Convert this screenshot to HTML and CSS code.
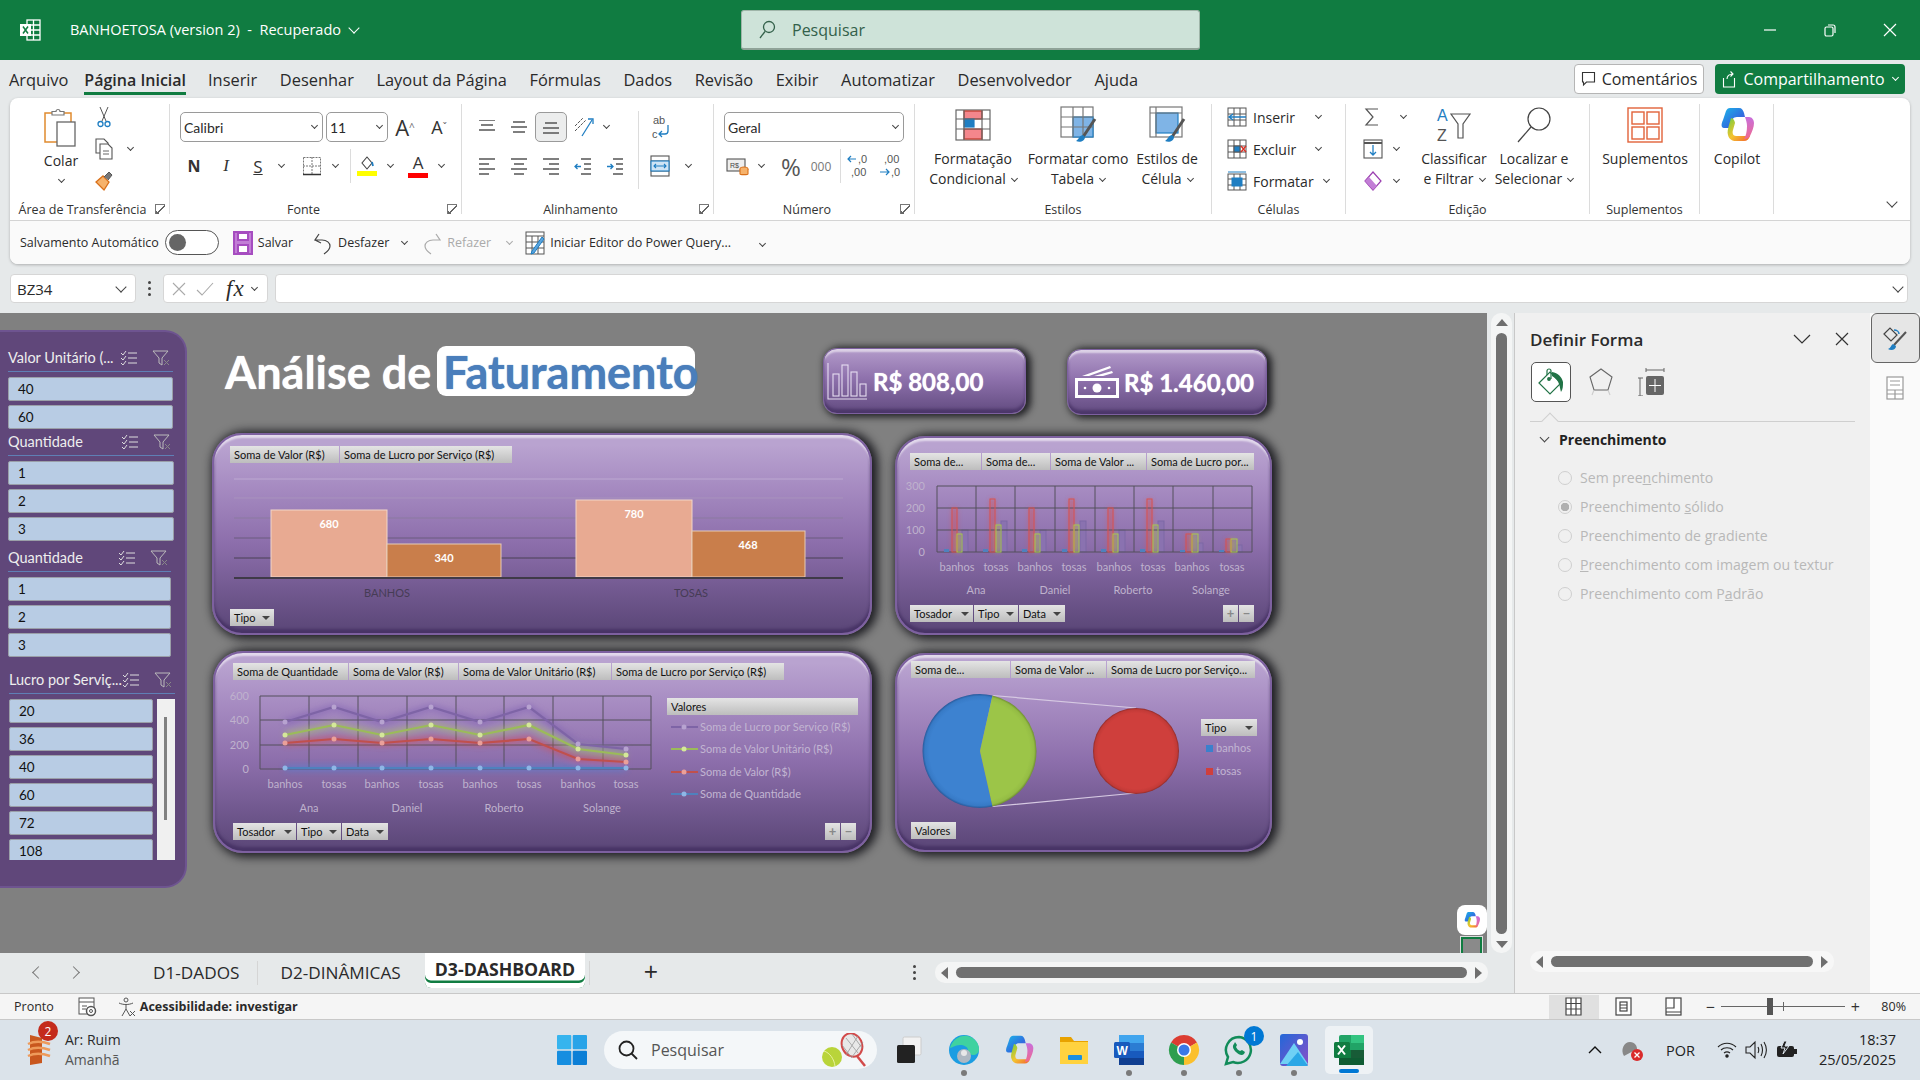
FILE: index.html
```html
<!DOCTYPE html>
<html lang="pt-BR">
<head>
<meta charset="UTF-8">
<title>BANHOETOSA - Excel</title>
<link rel="stylesheet" href="styles.css">
</head>
<body>
<div class="app">

    <!-- Barra de titulo -->
    <header class="titlebar">
        <div class="title-left">
            <svg class="xl-mark" width="22" height="24" viewBox="0 0 22 24" fill="none" stroke="#fff" stroke-width="1.3"><rect x="8" y="2" width="13" height="20"/><path d="M8 7h13M8 12h13M8 17h13M14.500 2v20"/><rect x="1" y="6" width="11" height="12" fill="#fff" stroke="none"/><path d="M4 8.500l5 7M9 8.500l-5 7" stroke="#107c41" stroke-width="1.500"/></svg>
            <span class="doc-name">BANHOETOSA (version 2)&nbsp; -&nbsp; Recuperado</span>
            <span class="ch ch-white"></span>
        </div>
        <div class="search-box">
            <svg width="18" height="20" viewBox="0 0 18 20" fill="none" stroke="#33604a" stroke-width="1.300"><circle cx="11" cy="7" r="5.500"/><path d="M7 11.500L2 18"/></svg>
            <span>Pesquisar</span>
        </div>
        <div class="win-controls">
            <svg width="14" height="14" viewBox="0 0 14 14" stroke="#fff" stroke-width="1.200"><path d="M1 7h12"/></svg>
            <svg width="14" height="14" viewBox="0 0 14 14" stroke="#fff" stroke-width="1.200" fill="none"><rect x="2" y="4" width="8" height="9" rx="1.500"/><path d="M5 2h5a2 2 0 0 1 2 2v6"/></svg>
            <svg width="14" height="14" viewBox="0 0 14 14" stroke="#fff" stroke-width="1.200"><path d="M1 1l12 12M13 1L1 13"/></svg>
        </div>
    </header>

    <!-- Abas -->
    <nav class="tabs">
        <span class="tab first">Arquivo</span>
        <span class="tab active">Página Inicial</span>
        <span class="tab">Inserir</span>
        <span class="tab">Desenhar</span>
        <span class="tab">Layout da Página</span>
        <span class="tab">Fórmulas</span>
        <span class="tab">Dados</span>
        <span class="tab">Revisão</span>
        <span class="tab">Exibir</span>
        <span class="tab">Automatizar</span>
        <span class="tab">Desenvolvedor</span>
        <span class="tab">Ajuda</span>
        <div class="tab-actions">
            <button class="btn-comments">
                <svg width="15" height="16" viewBox="0 0 15 16" fill="none" stroke="#333" stroke-width="1.100"><path d="M1.500 1.500h12v9.500h-8l-3 3v-3h-1z"/></svg>
                Comentários
            </button>
            <button class="btn-share">
                <svg width="15" height="17" viewBox="0 0 15 17" fill="none" stroke="#fff" stroke-width="1.100"><path d="M1.500 7v9h11V7M5 8c0-3 2-5 6-5M8.500 0.500L11 3 8.500 5.500"/></svg>
                Compartilhamento
                <span class="ch ch-white ch-small"></span>
            </button>
        </div>
    </nav>

    <!-- Faixa de opcoes -->
    <section class="ribbon">
        <div class="ribbon-groups">

            <div class="group g-clip">
                <div class="group-body clip-body">
                    <div class="paste">
                        <svg width="36" height="40" viewBox="0 0 36 40" fill="none"><rect x="2" y="5" width="26" height="29" fill="#fff" stroke="#e08a2e" stroke-width="1.500"/><path d="M9 7V3.500h4a2 2 0 0 1 4 0h4V7z" fill="#fff" stroke="#777" stroke-width="1.200"/><rect x="14" y="14" width="18" height="24" fill="#fff" stroke="#666" stroke-width="1.300"/></svg>
                        <span class="lbl">Colar</span>
                        <span class="ch"></span>
                    </div>
                    <div class="clip-tools">
                        <svg width="16" height="22" viewBox="0 0 16 22" fill="none" stroke="#555" stroke-width="1"><path d="M4 1l6 14M12 1L6 15"/><circle cx="4.500" cy="18" r="2.500" stroke="#1f7ec2" stroke-width="1.300"/><circle cx="11.500" cy="18" r="2.500" stroke="#1f7ec2" stroke-width="1.300"/></svg>
                        <div class="tool-row">
                            <svg width="20" height="22" viewBox="0 0 20 22" fill="#fff" stroke="#555" stroke-width="1.100"><path d="M2 1h8l4 4v10H2z"/><path d="M6 6h8l4 4v11H6z"/><path d="M9 13h6M9 16h6" stroke-width=".9"/></svg>
                            <span class="ch"></span>
                        </div>
                        <svg class="brush" width="20" height="22" viewBox="0 0 20 22" fill="none"><path d="M2 12l7-6 6 6-5 8z" fill="#f6b26b" stroke="#d9701a" stroke-width="1.300"/><path d="M10 7l5-5 3 3-4 5" fill="#777" stroke="#555"/></svg>
                    </div>
                </div>
                <div class="group-label"><span>Área de Transferência</span><i class="launcher"></i></div>
            </div>

            <div class="group g-font">
                <div class="group-body">
                    <div class="row">
                        <div class="combo c-font">Calibri<span class="ch"></span></div>
                        <div class="combo c-size">11<span class="ch"></span></div>
                        <span class="ib grow">A<sup>^</sup></span>
                        <span class="ib grow small-a">A<sup>ˇ</sup></span>
                    </div>
                    <div class="row row2">
                        <span class="ib bold">N</span>
                        <span class="ib ital">I</span>
                        <span class="ib under">S</span>
                        <span class="ch ch-slot"></span>
                        <span class="ib ib-border">
                            <svg width="20" height="20" viewBox="0 0 20 20" fill="none" stroke="#777" stroke-width="1" stroke-dasharray="2 1"><rect x="1.500" y="1.500" width="17" height="17"/><path d="M10 1v18M1 10h18"/><path d="M1 18.500h18" stroke="#333" stroke-width="1.500" stroke-dasharray="none"/></svg>
                        </span>
                        <span class="ch ch-slot"></span>
                        <i class="vsep"></i>
                        <span class="ib swatch-btn">
                            <svg width="18" height="14" viewBox="0 0 18 14" fill="#fff" stroke="#444" stroke-width="1.100"><path d="M9 1l5 6-5 6-5-6z"/><path d="M14 6l1 4" stroke="#1f7ec2" stroke-width="1.800"/></svg>
                            <i class="swatch yellow"></i>
                        </span>
                        <span class="ch ch-slot"></span>
                        <span class="ib swatch-btn ib-fc">
                            <b class="font-color">A</b>
                            <i class="swatch red"></i>
                        </span>
                        <span class="ch ch-slot"></span>
                    </div>
                </div>
                <div class="group-label label-font"><span>Fonte</span><i class="launcher"></i></div>
            </div>

            <div class="group g-align">
                <div class="group-body">
                    <div class="row">
                        <span class="ib"><svg width="18" height="14" viewBox="0 0 18 14" stroke="#555" stroke-width="1.300"><path d="M1 1h16M3 6h12M1 11h16" transform="translate(0 -1)"/></svg></span>
                        <span class="ib"><svg width="18" height="14" viewBox="0 0 18 14" stroke="#555" stroke-width="1.300"><path d="M3 2h12M1 7h16M3 12h12"/></svg></span>
                        <span class="ib ib-on"><svg width="18" height="14" viewBox="0 0 18 14" stroke="#555" stroke-width="1.300"><path d="M3 3h12M1 8h16M1 13h16"/></svg></span>
                        <span class="ib"><svg width="22" height="22" viewBox="0 0 22 22" fill="none" stroke="#555" stroke-width="1"><path d="M3 10l8-8M3 15l11-11" stroke-dasharray="3 1"/><path d="M20 4L10 20" stroke="#1f7ec2" stroke-width="1.300"/><path d="M16 3h5v5" stroke="#1f7ec2" stroke-width="1.300"/></svg></span>
                        <span class="ch ch-slot"></span>
                        <i class="vsep tall"></i>
                        <span class="ib wrap-ico"><svg width="20" height="28" viewBox="0 0 20 28" fill="none"><text x="2" y="11" font-family="Liberation Sans" font-size="11" fill="#555">ab</text><text x="1" y="25" font-family="Liberation Sans" font-size="11" fill="#555">c</text><path d="M17 12v6a3 3 0 0 1-3 3H8m3-3l-3 3 3 3" stroke="#1f7ec2" stroke-width="1.300"/></svg></span>
                    </div>
                    <div class="row row2">
                        <span class="ib"><svg width="18" height="18" viewBox="0 0 18 18" stroke="#555" stroke-width="1.300"><path d="M1 2h16M1 7h10M1 12h16M1 17h10"/></svg></span>
                        <span class="ib"><svg width="18" height="18" viewBox="0 0 18 18" stroke="#555" stroke-width="1.300"><path d="M1 2h16M4 7h10M1 12h16M4 17h10"/></svg></span>
                        <span class="ib"><svg width="18" height="18" viewBox="0 0 18 18" stroke="#555" stroke-width="1.300"><path d="M1 2h16M7 7h10M1 12h16M7 17h10"/></svg></span>
                        <span class="ib"><svg width="18" height="18" viewBox="0 0 18 18" fill="none" stroke="#555" stroke-width="1.300"><path d="M7 2h10M10 7h7M10 12h7M7 17h10"/><path d="M7 9.500H1m2.500-2.500L1 9.500 3.500 12" stroke="#1f7ec2"/></svg></span>
                        <span class="ib"><svg width="18" height="18" viewBox="0 0 18 18" fill="none" stroke="#555" stroke-width="1.300"><path d="M7 2h10M10 7h7M10 12h7M7 17h10"/><path d="M1 9.500h6M4.500 7L7 9.500 4.500 12" stroke="#1f7ec2"/></svg></span>
                        <i class="vsep ghost"></i>
                        <span class="ib merge-ico"><svg width="20" height="22" viewBox="0 0 20 22" fill="none" stroke="#555" stroke-width="1.100"><rect x="1" y="1" width="18" height="20"/><path d="M1 6h18M1 16h18"/><rect x="1" y="6" width="18" height="10" fill="#cfe4f5" stroke="#1f7ec2"/><path d="M4 11h12M6 9l-2 2 2 2M14 9l2 2-2 2" stroke="#1f7ec2"/></svg></span>
                        <span class="ch ch-slot"></span>
                    </div>
                </div>
                <div class="group-label"><span>Alinhamento</span><i class="launcher"></i></div>
            </div>

            <div class="group g-number">
                <div class="group-body">
                    <div class="row"><div class="combo c-num">Geral<span class="ch"></span></div></div>
                    <div class="row row2">
                        <span class="ib"><svg width="24" height="20" viewBox="0 0 24 20" fill="none" stroke="#555" stroke-width="1.100"><rect x="1" y="3" width="18" height="12" fill="#eee"/><text x="4" y="12" font-size="7" font-family="Liberation Sans" fill="#444" stroke="none">R$</text><ellipse cx="18" cy="13" rx="4" ry="2" fill="#f6b26b" stroke="#d9701a"/><path d="M14 13v5c0 1 8 1 8 0v-5" fill="#f6b26b" stroke="#d9701a"/></svg></span>
                        <span class="ch ch-slot"></span>
                        <span class="pct">%</span>
                        <span class="thou">000</span>
                        <i class="vsep"></i>
                        <span class="ib"><svg width="24" height="26" viewBox="0 0 24 26" fill="none"><path d="M10 6H2m3-3L2 6l3 3" stroke="#1f7ec2" stroke-width="1.200"/><text x="12" y="10" font-size="11" font-family="Liberation Sans" fill="#555">,0</text><text x="5" y="23" font-size="11" font-family="Liberation Sans" fill="#555">,00</text></svg></span>
                        <span class="ib"><svg width="24" height="26" viewBox="0 0 24 26" fill="none"><text x="6" y="10" font-size="11" font-family="Liberation Sans" fill="#555">,00</text><text x="13" y="23" font-size="11" font-family="Liberation Sans" fill="#555">,0</text><path d="M2 19h9m-3-3l3 3-3 3" stroke="#1f7ec2" stroke-width="1.200"/></svg></span>
                    </div>
                </div>
                <div class="group-label"><span>Número</span><i class="launcher"></i></div>
            </div>

            <div class="group g-styles">
                <div class="group-body big-row">
                    <div class="big b-cond">
                        <svg class="big-ico" width="38" height="36" viewBox="0 0 38 36" fill="#fff" stroke="#666" stroke-width="1.200"><rect x="2" y="3" width="34" height="30"/><rect x="10" y="4" width="18" height="8" fill="#f4868c" stroke="#c0392b"/><rect x="10" y="12" width="10" height="8" fill="#1f7ec2" stroke="#1f7ec2"/><rect x="10" y="22" width="18" height="10" fill="#f4868c" stroke="#c0392b"/><path d="M2 12h34M2 22h34M10 3v30M28 3v30"/></svg>
                        <span class="lbl">Formatação</span>
                        <span class="lbl">Condicional<span class="ch"></span></span>
                    </div>
                    <div class="big b-table">
                        <svg class="big-ico" width="38" height="40" viewBox="0 0 38 40" fill="#fff" stroke="#777" stroke-width="1.200"><rect x="2" y="2" width="32" height="30"/><rect x="14" y="12" width="20" height="20" fill="#7fb4e6" stroke="#1f7ec2"/><path d="M2 12h32M2 22h32M14 2v30M24 2v30"/><path d="M36 14L24 32" stroke="#555" stroke-width="3"/><path d="M24 30c-3 0-4 4-7 6 4 2 9 0 9-4z" fill="#1f7ec2" stroke="none"/></svg>
                        <span class="lbl">Formatar como</span>
                        <span class="lbl">Tabela<span class="ch"></span></span>
                    </div>
                    <div class="big b-cell">
                        <svg class="big-ico" width="38" height="40" viewBox="0 0 38 40" fill="#fff" stroke="#777" stroke-width="1.200"><rect x="2" y="2" width="32" height="30"/><rect x="8" y="8" width="22" height="20" fill="#7fb4e6" stroke="#1f7ec2"/><path d="M2 8h32M8 2v30"/><path d="M36 14L24 32" stroke="#555" stroke-width="3"/><path d="M24 30c-3 0-4 4-7 6 4 2 9 0 9-4z" fill="#1f7ec2" stroke="none"/></svg>
                        <span class="lbl">Estilos de</span>
                        <span class="lbl">Célula<span class="ch"></span></span>
                    </div>
                </div>
                <div class="group-label"><span>Estilos</span></div>
            </div>

            <div class="group g-cells">
                <div class="group-body stack">
                    <div class="stack-row">
                        <svg width="22" height="20" viewBox="0 0 22 20" fill="#fff" stroke="#555" stroke-width="1"><rect x="2" y="1" width="18" height="18"/><path d="M2 7h18M2 13h18M8 1v18M14 1v18"/><path d="M20 10H3m4-3l-4 3 4 3" fill="none" stroke="#1f7ec2" stroke-width="1.500"/></svg>
                        <span>Inserir</span><span class="ch ch-end"></span>
                    </div>
                    <div class="stack-row">
                        <svg width="22" height="20" viewBox="0 0 22 20" fill="#fff" stroke="#555" stroke-width="1"><rect x="2" y="1" width="18" height="18"/><path d="M2 7h18M2 13h18M8 1v18M14 1v18"/><rect x="8" y="7" width="6" height="6" fill="#1f7ec2"/><path d="M15 7l5 6M20 7l-5 6" stroke="#d93025" stroke-width="1.400"/></svg>
                        <span>Excluir</span><span class="ch ch-end"></span>
                    </div>
                    <div class="stack-row">
                        <svg width="22" height="20" viewBox="0 0 22 20" fill="#fff" stroke="#555" stroke-width="1"><rect x="2" y="3" width="18" height="16"/><path d="M2 8h18M2 14h18M8 3v16M14 3v16"/><rect x="6" y="7" width="10" height="8" fill="#1f7ec2" stroke="#1f7ec2"/><path d="M2 1h18" stroke="#1f7ec2"/></svg>
                        <span>Formatar</span><span class="ch"></span>
                    </div>
                </div>
                <div class="group-label"><span>Células</span></div>
            </div>

            <div class="group g-edit">
                <div class="group-body big-row">
                    <div class="stack edit-stack">
                        <div class="stack-row"><svg width="18" height="20" viewBox="0 0 18 20" fill="none" stroke="#555" stroke-width="1.200"><path d="M15 2H3l7 8-7 8h12"/></svg><span class="ch ch-sum"></span></div>
                        <div class="stack-row"><svg width="20" height="20" viewBox="0 0 20 20" fill="#fff" stroke="#555" stroke-width="1.100"><rect x="1" y="1" width="18" height="18"/><path d="M1 4h18" stroke-width="2"/><path d="M10 6v10m-3-3l3 3 3-3" fill="none" stroke="#1f7ec2" stroke-width="1.300"/></svg><span class="ch"></span></div>
                        <div class="stack-row"><svg width="20" height="20" viewBox="0 0 20 20" stroke="#9b3fb0" stroke-width="1.200" fill="#fff"><path d="M10 1l8 9-8 9-8-9z"/><path d="M6 6l8 9-4 4-8-9z" fill="#c27ed6" stroke="none"/></svg><span class="ch"></span></div>
                    </div>
                    <div class="big b-sort">
                        <svg class="big-ico" width="38" height="38" viewBox="0 0 38 38" fill="none"><text x="2" y="15" font-family="Liberation Sans" font-size="16" fill="#1f7ec2">A</text><text x="2" y="35" font-family="Liberation Sans" font-size="16" fill="#555">Z</text><path d="M16 8h19l-7 10v14h-5V18z" stroke="#555" stroke-width="1.200"/></svg>
                        <span class="lbl">Classificar</span>
                        <span class="lbl">e Filtrar<span class="ch"></span></span>
                    </div>
                    <div class="big b-find">
                        <svg class="big-ico" width="38" height="38" viewBox="0 0 38 38" fill="none" stroke="#444" stroke-width="1.200"><circle cx="24" cy="13" r="11"/><path d="M16 21L3 36"/></svg>
                        <span class="lbl">Localizar e</span>
                        <span class="lbl">Selecionar<span class="ch"></span></span>
                    </div>
                </div>
                <div class="group-label"><span>Edição</span></div>
            </div>

            <div class="group g-addin">
                <div class="group-body big-row">
                    <div class="big b-addin">
                        <svg class="big-ico" width="36" height="36" viewBox="0 0 36 36" fill="none" stroke="#e2633a" stroke-width="1.400"><rect x="1" y="1" width="34" height="34"/><rect x="5" y="5" width="12" height="12"/><rect x="20" y="5" width="12" height="12"/><rect x="5" y="20" width="12" height="12"/><rect x="20" y="20" width="12" height="12"/></svg>
                        <span class="lbl">Suplementos</span>
                    </div>
                </div>
                <div class="group-label"><span>Suplementos</span></div>
            </div>

            <div class="group g-copilot">
                <div class="group-body big-row">
                    <div class="big b-copilot">
                        <svg class="big-ico" width="38" height="36" viewBox="0 0 38 36">
                            <defs>
                                <linearGradient id="cpA" x1="0" y1="0" x2="1" y2="1"><stop offset="0" stop-color="#1bb7e8"/><stop offset=".6" stop-color="#2f6fe0"/><stop offset="1" stop-color="#7b4fd8"/></linearGradient>
                                <linearGradient id="cpB" x1="0" y1="0" x2="1" y2="1"><stop offset="0" stop-color="#6fce3e"/><stop offset=".5" stop-color="#f4c430"/><stop offset="1" stop-color="#f2622e"/></linearGradient>
                                <linearGradient id="cpC" x1="0" y1="0" x2="0" y2="1"><stop offset="0" stop-color="#c86fdc"/><stop offset="1" stop-color="#ef6a8f"/></linearGradient>
                            </defs>
                            <path d="M12 1h9c3 0 4 2 5 5l1 4H19c-4 0-5 3-6 6l-2 5H6C3 21 3 17 5 13l3-9c1-2 2-3 4-3z" fill="url(#cpA)"/>
                            <path d="M13 11l-2 7c-1 4-2 7-1 10 1 4 4 6 8 6h8c3 0 5-2 6-5H18c-3 0-4-3-3-6l2-7c0-2-2-5-4-5z" fill="url(#cpB)"/>
                            <path d="M27 10h4c3 0 5 3 5 6 0 4-2 9-4 13-1 2-3 3-6 3 2-3 3-8 3-13 0-3-1-6-2-9z" fill="url(#cpC)"/>
                        </svg>
                        <span class="lbl">Copilot</span>
                    </div>
                </div>
            </div>

            <div class="ribbon-end"><span class="ch ch-big"></span></div>
        </div>

        <!-- Barra de acesso rapido -->
        <div class="qat">
            <span>Salvamento Automático</span>
            <span class="toggle"><i></i></span>
            <svg class="q-save" width="20" height="24" viewBox="0 0 20 24" fill="#fff" stroke="#a64dc0" stroke-width="2"><rect x="1" y="1" width="18" height="22" fill="#c27ed6"/><rect x="5" y="2" width="10" height="7"/><rect x="5" y="14" width="10" height="8"/></svg>
            <span class="q-item">Salvar</span>
            <svg class="q-undo" width="20" height="24" viewBox="0 0 20 24" fill="none" stroke="#444" stroke-width="1.200"><path d="M6 3L2 9h7c5 0 8 3 8 6 0 4-3 6-6 8M2 9l6 3"/></svg>
            <span class="q-item">Desfazer</span>
            <span class="ch ch-q"></span>
            <svg class="q-redo" width="20" height="24" viewBox="0 0 20 24" fill="none" stroke="#aaa" stroke-width="1.200"><path d="M14 3l4 6h-7C6 9 3 12 3 15c0 4 3 6 6 8"/></svg>
            <span class="q-item q-off">Refazer</span>
            <span class="ch ch-q ch-off"></span>
            <svg class="q-pq" width="21" height="24" viewBox="0 0 21 24" fill="#fff" stroke="#555" stroke-width="1"><rect x="1" y="1" width="18" height="22"/><path d="M1 5h18M1 11h18M1 17h18M7 5v18M13 5v18"/><path d="M19 8L9 22l-3 1 1-3L17 6z" fill="#5ba4de" stroke="#1f7ec2"/></svg>
            <span class="q-item q-pq-text">Iniciar Editor do Power Query...</span>
            <span class="q-more"><span class="ch"></span></span>
        </div>
    </section>

    <!-- Barra de formulas -->
    <div class="formula-bar">
        <div class="name-box"><span>BZ34</span><span class="ch ch-big"></span></div>
        <div class="kebab"><i></i><i></i><i></i></div>
        <div class="fx-box">
            <svg width="16" height="16" viewBox="0 0 16 16" stroke="#aaa" stroke-width="1.100"><path d="M2 2l12 12M14 2L2 14"/></svg>
            <svg class="fx-check" width="18" height="16" viewBox="0 0 18 16" stroke="#aaa" stroke-width="1.100" fill="none"><path d="M1 9l5 5L17 2"/></svg>
            <span class="fx">fx</span>
            <span class="ch"></span>
        </div>
        <div class="formula-input"><span class="ch ch-big"></span></div>
    </div>

    <main class="workspace">
        <div class="book">
            <div class="sheet-row">
                <div class="sheet">

                    <!-- Segmentacoes -->
                    <aside class="slicers">
                        <div class="slicer s-a">
                            <div class="slicer-head">
                                <span>Valor Unitário (...</span>
                                <svg class="ms" width="18" height="16" viewBox="0 0 18 16" fill="none" stroke="#ddd"><path d="M1 3l2 2 3-4M1 8l2 2 3-4M1 13l2 2 3-4M8 3h9M8 8h9M8 13h9"/></svg>
                                <svg class="fl" width="18" height="16" viewBox="0 0 18 16" fill="none" stroke="#bbb"><path d="M1 1h15l-6 7v7l-3-2V8z"/><path d="M12 10l5 5M17 10l-5 5" stroke="#888"/></svg>
                            </div>
                            <div class="sl-btn">40</div><div class="sl-btn">60</div>
                        </div>
                        <div class="slicer s-b">
                            <div class="slicer-head">
                                <span>Quantidade</span>
                                <svg class="ms" width="18" height="16" viewBox="0 0 18 16" fill="none" stroke="#ddd"><path d="M1 3l2 2 3-4M1 8l2 2 3-4M1 13l2 2 3-4M8 3h9M8 8h9M8 13h9"/></svg>
                                <svg class="fl" width="18" height="16" viewBox="0 0 18 16" fill="none" stroke="#bbb"><path d="M1 1h15l-6 7v7l-3-2V8z"/><path d="M12 10l5 5M17 10l-5 5" stroke="#888"/></svg>
                            </div>
                            <div class="sl-btn">1</div><div class="sl-btn">2</div><div class="sl-btn">3</div>
                        </div>
                        <div class="slicer s-c">
                            <div class="slicer-head">
                                <span>Quantidade</span>
                                <svg class="ms" width="18" height="16" viewBox="0 0 18 16" fill="none" stroke="#ddd"><path d="M1 3l2 2 3-4M1 8l2 2 3-4M1 13l2 2 3-4M8 3h9M8 8h9M8 13h9"/></svg>
                                <svg class="fl" width="18" height="16" viewBox="0 0 18 16" fill="none" stroke="#bbb"><path d="M1 1h15l-6 7v7l-3-2V8z"/><path d="M12 10l5 5M17 10l-5 5" stroke="#888"/></svg>
                            </div>
                            <div class="sl-btn">1</div><div class="sl-btn">2</div><div class="sl-btn">3</div>
                        </div>
                        <div class="slicer s-d">
                            <div class="slicer-head">
                                <span>Lucro por Serviç...</span>
                                <svg class="ms" width="18" height="16" viewBox="0 0 18 16" fill="none" stroke="#ddd"><path d="M1 3l2 2 3-4M1 8l2 2 3-4M1 13l2 2 3-4M8 3h9M8 8h9M8 13h9"/></svg>
                                <svg class="fl" width="18" height="16" viewBox="0 0 18 16" fill="none" stroke="#bbb"><path d="M1 1h15l-6 7v7l-3-2V8z"/><path d="M12 10l5 5M17 10l-5 5" stroke="#888"/></svg>
                            </div>
                            <div class="sl-scroll">
                                <div class="sl-list">
                                    <div class="sl-btn">20</div><div class="sl-btn">36</div><div class="sl-btn">40</div>
                                    <div class="sl-btn">60</div><div class="sl-btn">72</div><div class="sl-btn">108</div>
                                </div>
                                <div class="sl-bar"><i></i></div>
                            </div>
                        </div>
                    </aside>

                    <!-- Painel -->
                    <div class="dashboard">
                        <div class="dash-top">
                            <h1 class="dash-title">Análise de</h1>
                            <div class="dash-mark">Faturamento</div>
                            <div class="kpi kpi-a">
                                <svg width="42" height="38" viewBox="0 0 42 38" fill="none" stroke="#e6dcf0" stroke-width="1.100"><path d="M1 1v36h39"/><rect x="6" y="12" width="6" height="22"/><rect x="15" y="3" width="6" height="31"/><rect x="24" y="10" width="6" height="24"/><rect x="33" y="22" width="6" height="12"/></svg>
                                <span>R$ 808,00</span>
                            </div>
                            <div class="kpi kpi-b">
                                <svg width="46" height="34" viewBox="0 0 46 34" fill="#fff"><path d="M8 11L36 1l1 2-22 8zM20 11L38 6l1 2-10 3z"/><path fill-rule="evenodd" d="M1 13h44v20H1zM4 16v14h38V16z"/><circle cx="23" cy="23" r="4.500"/><circle cx="11" cy="23" r="1.300"/><circle cx="35" cy="23" r="1.300"/></svg>
                                <span>R$ 1.460,00</span>
                            </div>
                        </div>

                        <div class="dash-row">
                            <div class="card card-bars">
                                <div class="fields">
                                    <span class="fld f1">Soma de Valor (R$)</span>
                                    <span class="fld f2">Soma de Lucro por Serviço (R$)</span>
                                </div>
                                <svg class="chart" width="660" height="146" viewBox="212 463 660 146">
                                    <path d="M234 479h609" stroke="#bda9d1"/><path d="M234 498h609" stroke="#a892bd"/><path d="M234 518h609" stroke="#8b7ba0"/><path d="M234 538h609" stroke="#6b5c7e"/><path d="M234 558h609" stroke="#4a4054"/>
                                    <rect x="271" y="510" width="116" height="67" fill="#e8aa92" stroke="#f2d6c8"/>
                                    <rect x="387" y="544" width="114" height="33" fill="#c97e4b" stroke="#e6cbb6"/>
                                    <rect x="576" y="500" width="116" height="77" fill="#e8aa92" stroke="#f2d6c8"/>
                                    <rect x="692" y="531" width="113" height="46" fill="#c97e4b" stroke="#e6cbb6"/>
                                    <path d="M234 578h609" stroke="#3f3a48" stroke-width="2"/>
                                    <g class="bar-val"><text x="329" y="528">680</text><text x="444" y="562">340</text><text x="634" y="518">780</text><text x="748" y="549">468</text></g>
                                    <g class="cat-dark"><text x="387" y="597">BANHOS</text><text x="691" y="597">TOSAS</text></g>
                                </svg>
                                <div class="fields"><span class="fld f-tipo">Tipo<i class="drop"></i></span></div>
                            </div>
                            <div class="card card-col">
                                <div class="fields">
                                    <span class="fld c1">Soma de...</span>
                                    <span class="fld c2">Soma de...</span>
                                    <span class="fld c3">Soma de Valor ...</span>
                                    <span class="fld c4">Soma de Lucro por...</span>
                                </div>
                                <svg class="chart" width="377" height="135" viewBox="895 470 377 135">
                                    <defs>
                                        <filter id="glow" x="-100%" y="-50%" width="300%" height="200%"><feGaussianBlur stdDeviation="2.500"/></filter>
                                        <filter id="glowLine" x="-10%" y="-60%" width="120%" height="220%"><feGaussianBlur stdDeviation="3"/></filter>
                                        <linearGradient id="btn" x1="0" y1="0" x2="0" y2="1"><stop offset="0" stop-color="#e4e4e4"/><stop offset="1" stop-color="#bdbdbd"/></linearGradient>
                                    </defs>
                                    <g class="ax-y"><text x="925" y="490">300</text><text x="925" y="512">200</text><text x="925" y="534">100</text><text x="925" y="556">0</text></g>
                                    <g filter="url(#glow)" opacity=".5">
                                        <rect x="952" y="508" width="5" height="44" fill="#e04a45"/><rect x="990" y="499" width="5" height="53" fill="#e04a45"/><rect x="1029" y="508" width="5" height="44" fill="#e04a45"/><rect x="1069" y="499" width="5" height="53" fill="#e04a45"/><rect x="1108" y="508" width="5" height="44" fill="#e04a45"/><rect x="1147" y="499" width="5" height="53" fill="#e04a45"/><rect x="1186" y="534" width="5" height="18" fill="#e04a45"/><rect x="1226" y="539" width="5" height="13" fill="#e04a45"/>
                                        <rect x="957" y="534" width="5" height="18" fill="#a8c84e"/><rect x="996" y="525" width="5" height="27" fill="#a8c84e"/><rect x="1035" y="534" width="5" height="18" fill="#a8c84e"/><rect x="1074" y="525" width="5" height="27" fill="#a8c84e"/><rect x="1113" y="534" width="5" height="18" fill="#a8c84e"/><rect x="1153" y="525" width="5" height="27" fill="#a8c84e"/><rect x="1192" y="534" width="5" height="18" fill="#a8c84e"/><rect x="1231" y="539" width="5" height="13" fill="#a8c84e"/>
                                    </g>
                                    <g class="bars-purple"><rect x="962" y="530" width="6" height="22"/><rect x="1001" y="521" width="6" height="31"/><rect x="1040" y="530" width="6" height="22"/><rect x="1080" y="521" width="6" height="31"/><rect x="1119" y="530" width="6" height="22"/><rect x="1158" y="521" width="6" height="31"/><rect x="1198" y="543" width="5" height="9"/><rect x="1237" y="545" width="5" height="7"/></g>
                                    <path class="grid-dark" d="M937 486h315M937 508h315M937 530h315M937 552h315M937 486v66M976 486v66M1015 486v66M1055 486v66M1095 486v66M1134 486v66M1173 486v66M1213 486v66M1252 486v66"/>
                                    <g class="bars-red"><rect x="952" y="508" width="5" height="44"/><rect x="990" y="499" width="5" height="53"/><rect x="1029" y="508" width="5" height="44"/><rect x="1069" y="499" width="5" height="53"/><rect x="1108" y="508" width="5" height="44"/><rect x="1147" y="499" width="5" height="53"/><rect x="1186" y="534" width="6" height="18"/><rect x="1226" y="539" width="5" height="13"/></g>
                                    <g class="bars-green"><rect x="957" y="534" width="5" height="18"/><rect x="996" y="525" width="5" height="27"/><rect x="1035" y="534" width="5" height="18"/><rect x="1074" y="525" width="5" height="27"/><rect x="1113" y="534" width="5" height="18"/><rect x="1153" y="525" width="5" height="27"/><rect x="1192" y="534" width="6" height="18"/><rect x="1231" y="539" width="6" height="13"/></g>
                                    <g fill="#4f81bd"><rect x="944" y="549" width="5" height="3"/><rect x="983" y="549" width="5" height="3"/><rect x="1022" y="549" width="5" height="3"/><rect x="1062" y="549" width="5" height="3"/><rect x="1101" y="549" width="5" height="3"/><rect x="1140" y="549" width="5" height="3"/><rect x="1180" y="550" width="5" height="2"/><rect x="1219" y="550" width="5" height="2"/></g>
                                    <g class="cat-light"><text x="957" y="571">banhos</text><text x="996" y="571">tosas</text><text x="1035" y="571">banhos</text><text x="1074" y="571">tosas</text><text x="1114" y="571">banhos</text><text x="1153" y="571">tosas</text><text x="1192" y="571">banhos</text><text x="1232" y="571">tosas</text>
                                    <text x="976" y="594">Ana</text><text x="1055" y="594">Daniel</text><text x="1133" y="594">Roberto</text><text x="1211" y="594">Solange</text></g>
                                </svg>
                                <div class="fields fields-end">
                                    <span class="fld t1">Tosador<i class="drop"></i></span>
                                    <span class="fld t2">Tipo<i class="drop"></i></span>
                                    <span class="fld t3">Data<i class="drop"></i></span>
                                    <span class="pm">+</span><span class="pm">−</span>
                                </div>
                            </div>
                        </div>

                        <div class="dash-row dash-row2">
                            <div class="card card-line">
                                <div class="fields">
                                    <span class="fld l1">Soma de Quantidade</span>
                                    <span class="fld l2">Soma de Valor (R$)</span>
                                    <span class="fld l3">Soma de Valor Unitário (R$)</span>
                                    <span class="fld l4">Soma de Lucro por Serviço (R$)</span>
                                </div>
                                <svg class="chart" width="659" height="143" viewBox="213 680 659 143">
                                    <g class="ax-y"><text x="249" y="700">600</text><text x="249" y="724">400</text><text x="249" y="749">200</text><text x="249" y="773">0</text></g>
                                    <path class="grid-dark" d="M260 696h391M260 720h391M260 745h391M260 769h391M260 696v73M309 696v73M358 696v73M407 696v73M456 696v73M504 696v73M553 696v73M603 696v73M651 696v73"/>
                                    <g fill="none" stroke-width="5" filter="url(#glowLine)" opacity=".6">
                                        <path stroke="#7a5bb0" d="M285 722L334 707 382 722 431 707 480 722 529 707 578 744 626 749"/>
                                        <path stroke="#b5d85a" d="M285 735L334 725 382 735 431 725 480 735 529 725 578 749 626 755"/>
                                        <path stroke="#e04a45" d="M285 743L334 739 382 743 431 739 480 743 529 739 578 759 626 762"/>
                                        <path stroke="#3f86e0" d="M285 768H626"/>
                                    </g>
                                    <g fill="none" stroke-width="2.200">
                                        <path stroke="#7e64a6" d="M285 722L334 707 382 722 431 707 480 722 529 707 578 744 626 749"/>
                                        <path stroke="#9bbb59" d="M285 735L334 725 382 735 431 725 480 735 529 725 578 749 626 755"/>
                                        <path stroke="#c0504d" d="M285 743L334 739 382 743 431 739 480 743 529 739 578 759 626 762"/>
                                        <path stroke="#4f81bd" d="M285 768H626"/>
                                    </g>
                                    <g fill="#b7a3d0"><circle cx="285" cy="722" r="2.500"/><circle cx="334" cy="707" r="2.500"/><circle cx="382" cy="722" r="2.500"/><circle cx="431" cy="707" r="2.500"/><circle cx="480" cy="722" r="2.500"/><circle cx="529" cy="707" r="2.500"/><circle cx="578" cy="744" r="2.500"/><circle cx="626" cy="749" r="2.500"/></g>
                                    <g fill="#d5e89a"><circle cx="285" cy="735" r="2.500"/><circle cx="334" cy="725" r="2.500"/><circle cx="382" cy="735" r="2.500"/><circle cx="431" cy="725" r="2.500"/><circle cx="480" cy="735" r="2.500"/><circle cx="529" cy="725" r="2.500"/><circle cx="578" cy="749" r="2.500"/><circle cx="626" cy="755" r="2.500"/></g>
                                    <g fill="#eaa09a"><circle cx="285" cy="743" r="2.500"/><circle cx="334" cy="739" r="2.500"/><circle cx="382" cy="743" r="2.500"/><circle cx="431" cy="739" r="2.500"/><circle cx="480" cy="743" r="2.500"/><circle cx="529" cy="739" r="2.500"/><circle cx="578" cy="759" r="2.500"/><circle cx="626" cy="762" r="2.500"/></g>
                                    <g fill="#8fb6e6"><circle cx="285" cy="768" r="2.500"/><circle cx="334" cy="768" r="2.500"/><circle cx="382" cy="768" r="2.500"/><circle cx="431" cy="768" r="2.500"/><circle cx="480" cy="768" r="2.500"/><circle cx="529" cy="768" r="2.500"/><circle cx="578" cy="768" r="2.500"/><circle cx="626" cy="768" r="2.500"/></g>
                                    <g class="cat-light"><text x="285" y="788">banhos</text><text x="334" y="788">tosas</text><text x="382" y="788">banhos</text><text x="431" y="788">tosas</text><text x="480" y="788">banhos</text><text x="529" y="788">tosas</text><text x="578" y="788">banhos</text><text x="626" y="788">tosas</text>
                                    <text x="309" y="812">Ana</text><text x="407" y="812">Daniel</text><text x="504" y="812">Roberto</text><text x="602" y="812">Solange</text></g>
                                    <rect x="667" y="698" width="191" height="17" fill="url(#btn)"/>
                                    <text class="svg-fld" x="671" y="711">Valores</text>
                                    <g stroke-width="2"><path stroke="#7e64a6" d="M671 727h27"/><path stroke="#9bbb59" d="M671 749h27"/><path stroke="#c0504d" d="M671 772h27"/><path stroke="#4f81bd" d="M671 794h27"/></g>
                                    <circle cx="684" cy="727" r="2.500" fill="#b7a3d0"/><circle cx="684" cy="749" r="2.500" fill="#d5e89a"/><circle cx="684" cy="772" r="2.500" fill="#eaa09a"/><circle cx="684" cy="794" r="2.500" fill="#8fb6e6"/>
                                    <g class="legend"><text x="700" y="731">Soma de Lucro por Serviço (R$)</text><text x="700" y="753">Soma de Valor Unitário (R$)</text><text x="700" y="776">Soma de Valor (R$)</text><text x="700" y="798">Soma de Quantidade</text></g>
                                </svg>
                                <div class="fields fields-end">
                                    <span class="fld t1">Tosador<i class="drop"></i></span>
                                    <span class="fld t2">Tipo<i class="drop"></i></span>
                                    <span class="fld t3">Data<i class="drop"></i></span>
                                    <span class="pm">+</span><span class="pm">−</span>
                                </div>
                            </div>
                            <div class="card card-pie">
                                <div class="fields">
                                    <span class="fld p1">Soma de...</span>
                                    <span class="fld p2">Soma de Valor ...</span>
                                    <span class="fld p3">Soma de Lucro por Serviço...</span>
                                </div>
                                <svg class="chart" width="377" height="144" viewBox="896 678 377 144">
                                    <defs>
                                        <radialGradient id="pieBlue" gradientUnits="userSpaceOnUse" cx="980.500" cy="751" r="57"><stop offset=".88" stop-color="#3d82d0"/><stop offset=".96" stop-color="#377ac6"/><stop offset="1" stop-color="#28599a"/></radialGradient>
                                        <radialGradient id="pieGreen" gradientUnits="userSpaceOnUse" cx="980.500" cy="751" r="57"><stop offset=".88" stop-color="#9cc548"/><stop offset=".96" stop-color="#94bc44"/><stop offset="1" stop-color="#6f8e32"/></radialGradient>
                                        <radialGradient id="pieRed" r=".5"><stop offset=".88" stop-color="#cf3f3c"/><stop offset=".96" stop-color="#c23a37"/><stop offset="1" stop-color="#8e2b29"/></radialGradient>
                                    </defs>
                                    <path d="M993.500 695.500L1137 708M993.500 806.500L1137 793" stroke="#d6c9e2" stroke-width="1.200"/>
                                    <path d="M993.500 695.500A57 57 0 1 0 993.500 806.500L981 751z" fill="url(#pieBlue)"/>
                                    <path d="M993.500 695.500A57 57 0 0 1 993.500 806.500L981 751z" fill="url(#pieGreen)"/>
                                    <circle cx="1137" cy="751" r="43" fill="url(#pieRed)"/>
                                    <rect x="1202" y="719" width="56" height="17" fill="url(#btn)"/>
                                    <text class="svg-fld" x="1206" y="732">Tipo</text>
                                    <path d="M1246 726h8l-4 4z" fill="#444"/>
                                    <rect x="1207" y="745" width="7" height="7" fill="#3b80cc"/><rect x="1207" y="768" width="7" height="7" fill="#cf3f3c"/>
                                    <g class="legend"><text x="1217" y="752">banhos</text><text x="1217" y="775">tosas</text></g>
                                </svg>
                                <div class="fields"><span class="fld v1">Valores</span></div>
                            </div>
                        </div>
                    </div>

                    <div class="float-copilot">
                        <svg width="18" height="18" viewBox="0 0 38 36">
                            <path d="M12 1h9c3 0 4 2 5 5l1 4H19c-4 0-5 3-6 6l-2 5H6C3 21 3 17 5 13l3-9c1-2 2-3 4-3z" fill="url(#cpA)"/>
                            <path d="M13 11l-2 7c-1 4-2 7-1 10 1 4 4 6 8 6h8c3 0 5-2 6-5H18c-3 0-4-3-3-6l2-7c0-2-2-5-4-5z" fill="url(#cpB)"/>
                            <path d="M27 10h4c3 0 5 3 5 6 0 4-2 9-4 13-1 2-3 3-6 3 2-3 3-8 3-13 0-3-1-6-2-9z" fill="url(#cpC)"/>
                        </svg>
                    </div>
                    <div class="float-cell"></div>
                </div>

                <div class="vscroll">
                    <i class="arrow up"></i>
                    <i class="v-thumb"></i>
                    <i class="arrow down"></i>
                </div>
            </div>

            <!-- Planilhas -->
            <div class="sheet-tabs">
                <span class="nav-arrow left"></span>
                <span class="nav-arrow right"></span>
                <span class="sheet-tab">D1-DADOS</span>
                <i class="tab-sep"></i>
                <span class="sheet-tab">D2-DINÂMICAS</span>
                <span class="sheet-tab current">D3-DASHBOARD</span>
                <i class="tab-sep"></i>
                <span class="add-sheet">+</span>
                <div class="kebab dark"><i></i><i></i><i></i></div>
                <div class="hscroll">
                    <i class="arrow left"></i>
                    <i class="h-thumb"></i>
                    <i class="arrow right"></i>
                </div>
            </div>
        </div>

        <!-- Painel lateral -->
        <aside class="pane">
            <div class="pane-head">
                <h2>Definir Forma</h2>
                <svg width="18" height="12" viewBox="0 0 18 12" fill="none" stroke="#333" stroke-width="1.200"><path d="M1 2l8 8 8-8"/></svg>
                <svg width="14" height="14" viewBox="0 0 14 14" stroke="#333" stroke-width="1.200"><path d="M1 1l12 12M13 1L1 13"/></svg>
            </div>
            <div class="pane-icons">
                <span class="pane-ico on">
                    <svg width="28" height="28" viewBox="0 0 28 28" fill="none" stroke="#217346" stroke-width="1.200"><path d="M2 15l11-11 11 11-11 11z"/><path d="M10 7V3a2 2 0 0 1 4 0v8"/><circle cx="12" cy="11" r="1.300" fill="#217346"/><path d="M15 4c6 1 10 5 11 10 0 4 0 7-2 10-1-3-1-6-2-8-1-3-3-6-7-8z" fill="#217346" stroke="none"/></svg>
                </span>
                <span class="pane-ico">
                    <svg width="26" height="28" viewBox="0 0 26 28" fill="none" stroke="#666" stroke-width="1.100"><path d="M13 1l11 8-4 13H6L2 9z"/><path d="M6 22l-2 5M20 22l2 5" stroke="#ccc"/></svg>
                </span>
                <span class="pane-ico">
                    <svg width="28" height="28" viewBox="0 0 28 28" fill="none"><path d="M9 2h18M9 0v4M27 0v4M3 10v18M1 10h5M1 28h5" stroke="#666"/><rect x="9" y="8" width="18" height="19" rx="2" fill="#666"/><path d="M18 11v13M12 17.500h12" stroke="#fff"/></svg>
                </span>
            </div>
            <div class="pane-rule"><i></i></div>
            <div class="pane-section">
                <span class="ch ch-big"></span>
                <b>Preenchimento</b>
            </div>
            <div class="radio"><i></i><span>Sem pree<u>n</u>chimento</span></div>
            <div class="radio on"><i></i><span>Preenchimento <u>s</u>ólido</span></div>
            <div class="radio"><i></i><span>Preenchimento de <u>g</u>radiente</span></div>
            <div class="radio clip"><i></i><span><u>P</u>reenchimento com imagem ou textur</span></div>
            <div class="radio"><i></i><span>Preenchimento com P<u>a</u>drão</span></div>
            <div class="pane-scroll">
                <i class="arrow left"></i>
                <i class="pane-thumb"></i>
                <i class="arrow right"></i>
            </div>
        </aside>
        <div class="pane-strip">
            <span class="strip-btn on">
                <svg width="26" height="26" viewBox="0 0 26 26" fill="none"><path d="M2 9l6-6 7 7-6 6z" stroke="#444" stroke-width="1.200"/><path d="M12 5c3 0 5 2 5 4" stroke="#1f7ec2" stroke-width="1.500"/><path d="M24 7L12 20" stroke="#555" stroke-width="2"/><path d="M11 19c-2 1-2 4-5 5 3 2 8 1 8-3z" fill="#1f7ec2"/></svg>
            </span>
            <span class="strip-btn">
                <svg width="18" height="24" viewBox="0 0 18 24" fill="#fff" stroke="#999" stroke-width="1.200"><rect x="1" y="1" width="16" height="22"/><path d="M4 5h10M4 9h10M1 14h16M1 18h16M9 14v9"/></svg>
            </span>
        </div>
    </main>

    <!-- Barra de status -->
    <footer class="status">
        <span class="st-ready">Pronto</span>
        <svg class="st-macro" width="19" height="20" viewBox="0 0 19 20" fill="none" stroke="#555"><rect x="1" y="1" width="15" height="16" fill="#fff"/><path d="M1 5h15M4 9h5M4 12h4"/><circle cx="13" cy="14" r="4.500" fill="#fff" stroke-width="1.500"/><circle cx="13" cy="14" r="1.500"/></svg>
        <svg class="st-acc" width="20" height="20" viewBox="0 0 20 20" fill="none" stroke="#555"><circle cx="9" cy="3" r="2"/><path d="M2 6c4 2 10 2 14 0M9 8v4l-4 7M9 12l4 7"/><path d="M13 14l5 5M18 14l-5 5"/></svg>
        <b class="st-text">Acessibilidade: investigar</b>
        <div class="st-right">
            <span class="view on"><svg width="17" height="19" viewBox="0 0 17 19" fill="#fff" stroke="#444" stroke-width="1.200"><path d="M1 1h15v17H1zM1 6.500h15M1 12h15M6 1v17M11 1v17"/></svg></span>
            <span class="view"><svg width="17" height="19" viewBox="0 0 17 19" fill="#fff" stroke="#444" stroke-width="1.200"><rect x="1" y="1" width="15" height="17"/><rect x="5" y="5" width="7" height="9"/><path d="M5 8h7M5 11h7"/></svg></span>
            <span class="view"><svg width="17" height="19" viewBox="0 0 17 19" fill="#fff" stroke="#444" stroke-width="1.200"><rect x="1" y="1" width="15" height="17"/><path d="M1 11h8V1M1 15h15"/></svg></span>
            <span class="zoom-btn">−</span>
            <div class="zoom-track"><i class="thumb"></i><i class="mid"></i></div>
            <span class="zoom-btn">+</span>
            <span class="zoom-val">80%</span>
        </div>
    </footer>

    <!-- Barra de tarefas -->
    <div class="taskbar">
        <div class="weather">
            <svg width="26" height="34" viewBox="0 0 26 34"><path d="M3 2l12 3v25L3 32z" fill="#c9571e"/><path d="M1 11c6-3 14-3 22 0M1 17c6-3 14-3 22 0M1 23c6-3 14-3 22 0" fill="none" stroke="#ee9a5a" stroke-width="2.500"/></svg>
            <i class="badge red-badge">2</i>
            <div class="weather-text"><span>Ar: Ruim</span><span class="dim">Amanhã</span></div>
        </div>
        <div class="task-center">
            <svg class="win-logo" width="30" height="30" viewBox="0 0 30 30"><rect width="14.300" height="14.300" fill="#36b4ee" rx="1"/><rect x="15.700" width="14.300" height="14.300" fill="#28a4e8" rx="1"/><rect y="15.700" width="14.300" height="14.300" fill="#168ee0" rx="1"/><rect x="15.700" y="15.700" width="14.300" height="14.300" fill="#0c7fd6" rx="1"/></svg>
            <div class="task-search">
                <svg width="22" height="22" viewBox="0 0 22 22" fill="none" stroke="#222" stroke-width="1.800"><circle cx="9.500" cy="9.500" r="7"/><path d="M14.500 14.500L20 20"/></svg>
                <span>Pesquisar</span>
                <svg class="tennis" width="46" height="34" viewBox="0 0 46 34"><circle cx="10" cy="24" r="10" fill="#b9d43a"/><path d="M2 18c6 2 10 8 11 15" fill="none" stroke="#e8f2a0"/><ellipse cx="30" cy="12" rx="10" ry="12" transform="rotate(-25 30 12)" fill="#e8e8e8" stroke="#d24a4a" stroke-width="2"/><path d="M24 5l12 15M30 1l10 14M20 12l10 13M36 3L24 22M41 9L30 24" stroke="#999" stroke-width=".8"/><path d="M35 23l8 10" stroke="#d24a4a" stroke-width="2.500"/></svg>
            </div>
            <span class="app-ico"><svg width="28" height="28" viewBox="0 0 28 28"><rect x="8" y="1" width="18" height="18" rx="1.500" fill="#f2f2f2" stroke="#ccc"/><rect x="2" y="9" width="18" height="18" rx="1.500" fill="#222"/></svg></span>
            <span class="app-ico dot"><svg width="32" height="32" viewBox="0 0 32 32"><circle cx="16" cy="16" r="15" fill="#1b9de2"/><path d="M2 14c2-8 10-13 17-12 7 1 12 7 12 13 0 4-3 6-6 6-4 0-5-3-5-5 0-3-4-5-8-5-5 0-8 3-10 3z" fill="#3fd2a0"/><circle cx="16" cy="22" r="7" fill="#aeb8c2"/><circle cx="16" cy="19" r="3" fill="#e8e8e8"/></svg></span>
            <span class="app-ico"><svg width="32" height="32" viewBox="0 0 38 36"><path d="M12 1h9c3 0 4 2 5 5l1 4H19c-4 0-5 3-6 6l-2 5H6C3 21 3 17 5 13l3-9c1-2 2-3 4-3z" fill="url(#cpA)"/><path d="M13 11l-2 7c-1 4-2 7-1 10 1 4 4 6 8 6h8c3 0 5-2 6-5H18c-3 0-4-3-3-6l2-7c0-2-2-5-4-5z" fill="url(#cpB)"/><path d="M27 10h4c3 0 5 3 5 6 0 4-2 9-4 13-1 2-3 3-6 3 2-3 3-8 3-13 0-3-1-6-2-9z" fill="url(#cpC)"/></svg></span>
            <span class="app-ico"><svg width="32" height="30" viewBox="0 0 32 30"><path d="M2 2h11l3 4h14v5H2z" fill="#e8a200"/><path d="M2 7h28v22H2z" fill="#ffd23f"/><rect x="10" y="20" width="14" height="5" rx="1" fill="#1b8fe0"/></svg></span>
            <span class="app-ico dot"><svg width="32" height="32" viewBox="0 0 32 32"><rect x="6" y="1" width="25" height="30" rx="2" fill="#2b7cd3"/><rect x="6" y="1" width="25" height="8" fill="#41a5ee"/><rect x="6" y="17" width="25" height="7" fill="#185abd"/><rect x="6" y="24" width="25" height="7" fill="#103f91"/><rect x="1" y="8" width="16" height="16" rx="1.500" fill="#185abd"/><text x="3.500" y="21" font-family="Liberation Sans" font-weight="700" font-size="12" fill="#fff">W</text></svg></span>
            <span class="app-ico dot"><svg width="32" height="32" viewBox="0 0 32 32"><path d="M16 16L3 8.500A15 15 0 0 1 29 8.500z" fill="#dc3d32"/><path d="M16 16l13-7.500A15 15 0 0 1 16 31z" fill="#fbc02d"/><path d="M16 16v15A15 15 0 0 1 3 8.500z" fill="#2e9e4f"/><circle cx="16" cy="16" r="7" fill="#fff"/><circle cx="16" cy="16" r="5.500" fill="#3b78e7"/></svg></span>
            <span class="app-ico dot has-badge"><svg width="32" height="32" viewBox="0 0 32 32" fill="none"><path d="M16 3a13 13 0 0 0-11 20L3 30l7-2a13 13 0 1 0 6-25z" stroke="#128c5a" stroke-width="2.500"/><path d="M11 10c-2 2-1 5 2 8s6 4 8 2l1-2-3-2-2 1c-2-1-3-2-4-4l1-2-2-3z" fill="#128c5a"/></svg><i class="badge blue-badge">1</i></span>
            <span class="app-ico dot"><svg width="28" height="32" viewBox="0 0 28 32"><defs><linearGradient id="ph" x1="0" y1="0" x2="1" y2="1"><stop offset="0" stop-color="#2268d8"/><stop offset="1" stop-color="#8a4fc8"/></linearGradient></defs><rect width="28" height="32" rx="3" fill="url(#ph)"/><path d="M0 30L14 9l14 21z" fill="#6fd0f5"/><path d="M6 32l12-14 10 14z" fill="#2ba7e6"/><circle cx="20" cy="8" r="3" fill="#fff"/></svg></span>
            <span class="app-ico current"><svg width="32" height="32" viewBox="0 0 32 32"><rect x="6" y="1" width="25" height="30" rx="2" fill="#21a366"/><rect x="18" y="1" width="13" height="8" fill="#33c481"/><rect x="6" y="16" width="12" height="8" fill="#107c41"/><rect x="18" y="16" width="13" height="8" fill="#185c37"/><rect x="6" y="24" width="25" height="7" fill="#0f5c33"/><rect x="1" y="8" width="16" height="16" rx="1.500" fill="#107c41"/><path d="M5 11.500l7 9M12 11.500l-7 9" stroke="#fff" stroke-width="2"/></svg></span>
        </div>
        <div class="tray">
            <svg class="t-chev" width="14" height="10" viewBox="0 0 14 10" fill="none" stroke="#111" stroke-width="1.400"><path d="M1 8l6-6 6 6"/></svg>
            <svg class="t-cloud" width="24" height="24" viewBox="0 0 24 24"><path d="M4 18c-4-6 0-14 6-14 5 0 7 4 7 7" fill="#888"/><circle cx="17" cy="17" r="6" fill="#d92b2b"/><path d="M14.500 14.500l5 5M19.500 14.500l-5 5" stroke="#fff" stroke-width="1.300"/></svg>
            <span class="t-lang">POR</span>
            <svg width="20" height="20" viewBox="0 0 20 20" fill="none" stroke="#222" stroke-width="1.100"><path d="M1 7c5-5 13-5 18 0M4 10c3-3 9-3 12 0M7 13c2-1.500 4-1.500 6 0"/><circle cx="10" cy="16" r="1.200" fill="#222"/></svg>
            <svg width="22" height="20" viewBox="0 0 22 20" fill="none" stroke="#222" stroke-width="1.100"><path d="M1 7h4l5-5v16l-5-5H1zM13 7c1 2 1 4 0 6M16 4c2 4 2 8 0 12M19 2c3 5 3 11 0 16"/></svg>
            <svg width="24" height="20" viewBox="0 0 24 20"><rect x="2" y="6" width="17" height="11" rx="2" fill="#222"/><path d="M19 9h3v5h-3z" fill="#222"/><path d="M9 1l-3 7h4l-2 6 6-8h-4l2-5z" fill="#222" stroke="#dbe3ea"/></svg>
            <div class="clock"><span>18:37</span><span>25/05/2025</span></div>
        </div>
    </div>
</div>
</body>
</html>
```

FILE: styles.css
```css
/* Geral */
* {
    box-sizing: border-box;
}
html, body {
    margin: 0;
    padding: 0;
}
body {
    width: 1920px;
    height: 1080px;
    overflow: hidden;
    font-family: "Open Sans", "Noto Sans", sans-serif;
    color: #2a2a2a;
    background: #e6e9ea;
}
i {
    font-style: normal;
}
svg {
    flex: none;
    display: block;
}
.app {
    display: flex;
    flex-direction: column;
    width: 1920px;
    height: 1080px;
}

/* Setinhas */
.ch {
    display: inline-block;
    flex: none;
    width: 5px;
    height: 5px;
    margin: -3px 0 0 5px;
    border-right: 1.2px solid #444;
    border-bottom: 1.2px solid #444;
    transform: rotate(45deg);
    vertical-align: middle;
}
.ch-white {
    border-color: #fff;
    width: 8px;
    height: 8px;
    margin-left: 9px;
}
.ch-small {
    width: 5px;
    height: 5px;
}
.ch-big {
    width: 8px;
    height: 8px;
}
.ch-slot {
    width: 5px;
    margin: -3px 6px 0 5px;
}

/* Barra de titulo */
.titlebar {
    flex: none;
    display: flex;
    align-items: center;
    height: 60px;
    background: #107c41;
    color: #fff;
}
.title-left {
    display: flex;
    align-items: center;
    width: 741px;
    padding: 0 0 1px 19px;
    font-size: 14.5px;
}
.doc-name {
    margin-left: 29px;
}
.search-box {
    display: flex;
    align-items: center;
    gap: 16px;
    width: 459px;
    height: 40px;
    padding-left: 16px;
    background: #cee3d9;
    border: 1px solid #9fb5a9;
    border-bottom: 2px solid #8fa398;
    border-radius: 3px;
    color: #33604a;
    font-size: 16px;
}
.win-controls {
    flex: 1;
    display: flex;
    justify-content: flex-end;
    gap: 46px;
    padding-right: 23px;
}

/* Abas */
.tabs {
    flex: none;
    display: flex;
    align-items: flex-start;
    height: 38px;
    padding-left: 9px;
    font-size: 16.400px;
}
.tab {
    margin-top: 8px;
    margin-right: 22.600px;
    line-height: 24px;
    height: 27px;
}
.tab.first {
    margin-right: 16px;
}
.tab.active {
    font-weight: 600;
    font-size: 16px;
    margin-right: 22px;
    border-bottom: 3px solid #107c41;
}
.tab-actions {
    margin-left: auto;
    display: flex;
    gap: 11px;
    padding: 4px 15px 0 0;
}
.tab-actions button {
    display: flex;
    align-items: center;
    justify-content: center;
    gap: 6px;
    height: 30px;
    border-radius: 4px;
    font-family: inherit;
    font-size: 16px;
    padding: 0;
}
.btn-comments {
    width: 130px;
    background: #fff;
    border: 1px solid #b5b5b5;
    color: #2a2a2a;
}
.btn-share {
    width: 190px;
    background: #107c41;
    border: 0;
    color: #fff;
}
.btn-share .ch {
    margin-left: 2px;
}

/* Faixa de opcoes */
.ribbon {
    flex: none;
    margin: 0 10px;
    height: 166px;
    background: #fff;
    border-radius: 8px;
    box-shadow: 0 1px 3px rgba(0, 0, 0, .25);
    overflow: hidden;
}
.ribbon-groups {
    display: flex;
    height: 123px;
    padding-top: 6px;
    border-bottom: 1.5px solid #d4d4d4;
    font-size: 14px;
}
.group {
    display: flex;
    flex-direction: column;
    flex: none;
    height: 110px;
    border-right: 1px solid #dcdcdc;
}
.group-body {
    flex: 1;
    min-height: 0;
    padding-top: 8px;
}
.group-label {
    flex: none;
    display: flex;
    align-items: center;
    height: 20px;
    margin-bottom: -5px;
    font-size: 12.5px;
    color: #333;
}
.group-label span {
    flex: 1;
    text-align: center;
}
.label-font span {
    padding-right: 10px;
}
.launcher {
    flex: none;
    width: 10px;
    height: 10px;
    margin-right: 4px;
    border-left: 1px solid #777;
    border-top: 1px solid #777;
    background: linear-gradient(45deg, #666 0 18%, transparent 18%), linear-gradient(135deg, transparent 46%, #666 46% 56%, transparent 56%);
}
.g-clip { width: 160px; }
.g-font { width: 292px; }
.g-align { width: 252px; }
.g-number { width: 201px; }
.g-styles { width: 297px; }
.g-cells { width: 134px; }
.g-edit { width: 244px; }
.g-addin { width: 110px; }
.g-copilot { width: 74px; }

.clip-body {
    display: flex;
    padding-top: 0;
}
.paste {
    display: flex;
    flex-direction: column;
    align-items: center;
    width: 76px;
    padding: 4px 0 0 26px;
}
.paste .lbl {
    margin-top: 3px;
}
.paste .ch {
    margin: 7px 0 0;
}
.clip-tools {
    display: flex;
    flex-direction: column;
    align-items: flex-start;
    gap: 10px;
    padding: 2px 0 0 10px;
}
.tool-row {
    display: flex;
    align-items: center;
    margin-left: -2px;
}
.tool-row .ch {
    margin-left: 14px;
}
.brush {
    margin-left: -2px;
}

.row {
    display: flex;
    align-items: center;
    height: 30px;
    padding-left: 10px;
}
.row2 {
    height: 32px;
    margin-top: 8px;
    padding-left: 8px;
}
.combo {
    display: flex;
    align-items: center;
    justify-content: space-between;
    height: 30px;
    padding: 0 5px 0 3px;
    background: #fff;
    border: 1px solid #9a9a9a;
    border-radius: 5px;
    font-family: "Lato", sans-serif;
    font-size: 14px;
}
.c-font { width: 143px; }
.c-size { width: 62px; margin-left: 3px; }
.c-num { width: 180px; }
.ib {
    flex: none;
    display: flex;
    align-items: center;
    justify-content: center;
    width: 32px;
    height: 30px;
    color: #333;
}
.ib-on {
    background: #eceded;
    border: 1px solid #9a9a9a;
    border-radius: 5px;
}
.ib-border {
    margin-left: 6px;
}
.ib-fc {
    margin-left: 3px;
}
.grow {
    width: 34px;
    font-size: 22px;
}
.grow sup {
    font-size: 10px;
    color: #666;
    line-height: 1;
}
.small-a {
    font-size: 18px;
}
.bold {
    font-weight: 700;
    font-size: 16px;
}
.ital {
    font-style: italic;
    font-family: "Liberation Serif", serif;
    font-size: 17px;
}
.under {
    text-decoration: underline;
    font-size: 17px;
}
.vsep {
    flex: none;
    width: 1px;
    height: 34px;
    margin: 0 1px 0 0;
    background: #dcdcdc;
}
.g-font .vsep {
    margin: 0 0 0 6px;
}
.vsep.tall {
    height: 78px;
    margin: 46px 6px 0 23px;
}
.vsep.ghost {
    visibility: hidden;
    height: 10px;
    margin: 0 6px;
}
.merge-ico + .ch-slot {
    margin-left: 10px;
}
.swatch-btn {
    flex-direction: column;
    gap: 1px;
}
.swatch {
    width: 20px;
    height: 5px;
}
.yellow { background: #ffff00; }
.red { background: #ff0000; }
.font-color {
    font-weight: 400;
    font-size: 17px;
    line-height: 18px;
}
.g-align .row {
    padding-left: 9px;
}
.wrap-ico {
    height: 30px;
}
.pct {
    margin-left: 6px;
    font-size: 24px;
    color: #555;
    width: 30px;
    text-align: center;
}
.thou {
    font-size: 12px;
    color: #777;
    width: 30px;
    text-align: center;
    margin-right: 4px;
}

.big-row {
    display: flex;
    padding-top: 0;
}
.big {
    display: flex;
    flex-direction: column;
    align-items: center;
    flex: none;
    line-height: 20px;
    white-space: nowrap;
}
.big-ico {
    height: 40px;
    margin: 1px 0 4px;
}
.g-styles .big-row {
    padding-left: 3px;
}
.b-cond { width: 110px; }
.b-table { width: 100px; }
.b-cell { width: 78px; }
.b-sort { width: 80px; }
.b-find { width: 80px; }
.b-addin { width: 110px; }
.b-copilot { width: 74px; }
.big .ch {
    margin-left: 6px;
}

.stack {
    padding-top: 0;
}
.g-cells .stack {
    margin-top: -3px;
}
.stack-row {
    display: flex;
    align-items: center;
    gap: 5px;
    height: 32px;
    padding-left: 14px;
}
.ch-end {
    margin-left: auto;
    margin-right: 24px;
}
.edit-stack {
    width: 68px;
    margin-top: -3px;
}
.edit-stack .stack-row {
    padding-left: 17px;
    gap: 6px;
}
.ch-sum {
    margin-left: 14px;
}
.ribbon-end {
    flex: 1;
    display: flex;
    justify-content: flex-end;
    padding: 97px 14px 0 0;
}

/* Barra de acesso rapido */
.qat {
    display: flex;
    align-items: center;
    height: 43px;
    padding-left: 10px;
    background: #fafafa;
    font-size: 12.5px;
}
.toggle {
    width: 54px;
    height: 25px;
    margin-left: 6px;
    padding: 3px;
    border: 1.500px solid #555;
    border-radius: 13px;
    background: #fff;
}
.toggle i {
    display: block;
    width: 17px;
    height: 17px;
    border-radius: 50%;
    background: #666;
}
.q-save { margin-left: 14px; }
.q-item { margin-left: 5px; }
.q-undo { margin-left: 20px; }
.ch-q { margin-left: 13px; }
.q-redo { margin-left: 15px; }
.q-off { color: #aaa; }
.ch-off { border-color: #aaa; margin-left: 16px; }
.q-pq { margin-left: 13px; }
.q-pq-text { margin-left: 4px; }
.q-more {
    margin-left: 24px;
    padding-top: 2px;
    border-top: 1px solid transparent;
}

/* Barra de formulas */
.formula-bar {
    flex: none;
    display: flex;
    align-items: center;
    height: 49px;
    padding: 0 12px 0 10px;
    margin-bottom: 0;
}
.name-box {
    display: flex;
    align-items: center;
    justify-content: space-between;
    width: 126px;
    height: 29px;
    padding: 0 10px 0 6px;
    background: #fff;
    border: 1px solid #d6d6d6;
    border-radius: 4px;
    font-size: 15px;
}
.kebab {
    display: flex;
    flex-direction: column;
    align-items: center;
    gap: 3px;
    width: 27px;
}
.kebab i {
    width: 3px;
    height: 3px;
    background: #444;
    border-radius: 50%;
}
.fx-box {
    display: flex;
    align-items: center;
    gap: 6px;
    width: 105px;
    height: 29px;
    padding-left: 7px;
    background: #fff;
    border: 1px solid #d6d6d6;
    border-radius: 4px;
}
.fx-check {
    margin-left: 3px;
}
.fx {
    font-family: "Liberation Serif", serif;
    font-style: italic;
    font-size: 23px;
    margin-left: 6px;
    line-height: 1;
    letter-spacing: 1px;
}
.fx-box .ch {
    margin-left: 1px;
}
.formula-input {
    flex: 1;
    display: flex;
    align-items: center;
    justify-content: flex-end;
    height: 29px;
    margin-left: 7px;
    padding-right: 5px;
    background: #fff;
    border: 1px solid #d6d6d6;
    border-radius: 4px;
}

/* Area da planilha */
.workspace {
    flex: none;
    display: flex;
    height: 680px;
}
.book {
    display: flex;
    flex-direction: column;
    width: 1514px;
}
.sheet-row {
    display: flex;
    height: 640px;
}
.sheet {
    position: relative;
    display: flex;
    width: 1487px;
    background: #808080;
    overflow: hidden;
}
.vscroll {
    flex: 1;
    margin-left: 4px;
    margin-right: 2px;
    display: flex;
    flex-direction: column;
    align-items: center;
    padding: 6px 0 5px;
    background: #f4f5f5;
    border-radius: 10px;
}
.arrow {
    flex: none;
    display: block;
    width: 0;
    height: 0;
    border: 6px solid transparent;
}
.arrow.up {
    border-top: 0;
    border-bottom: 7px solid #6e6e6e;
}
.arrow.down {
    border-bottom: 0;
    border-top: 7px solid #6e6e6e;
}
.arrow.left {
    border-left: 0;
    border-right: 7px solid #6e6e6e;
}
.arrow.right {
    border-right: 0;
    border-left: 7px solid #6e6e6e;
}
.v-thumb {
    flex: 1;
    width: 11px;
    margin: 7px 0 7px;
    border-radius: 6px;
    background: #707070;
}

/* Segmentacoes */
.slicers {
    flex: none;
    display: flex;
    flex-direction: column;
    width: 187px;
    height: 558px;
    margin-top: 17px;
    padding: 15px 0 0 8px;
    background: #60477a;
    border: 2px solid #6e5490;
    border-left: 0;
    border-radius: 0 22px 22px 0;
    font-family: "Lato", sans-serif;
}
.slicer-head {
    display: flex;
    align-items: center;
    height: 25px;
    padding-bottom: 3px;
    margin-bottom: 1px;
    border-bottom: 1px solid #5f7fb5;
    color: #eee;
    font-size: 14.500px;
    white-space: nowrap;
}
.slicer-head span {
    flex: 1;
}
.fl {
    margin: 0 3px 0 14px;
}
.slicer {
    display: flex;
    flex-direction: column;
    gap: 4px;
}
.s-a { width: 165px; }
.s-b { width: 166px; margin-top: 2px; }
.s-c { width: 163px; margin-top: 6px; }
.s-d { width: 166px; margin-top: 12px; margin-left: 1px; }
.sl-btn {
    flex: none;
    height: 24px;
    padding-left: 9px;
    background: #b8cce4;
    border: 1px solid #9a9fa8;
    border-radius: 2px;
    color: #111;
    font-size: 13.500px;
    line-height: 22px;
}
.sl-scroll {
    display: flex;
    gap: 4px;
    height: 161px;
    overflow: hidden;
}
.sl-list {
    flex: 1;
    display: flex;
    flex-direction: column;
    gap: 4px;
}
.sl-bar {
    width: 18px;
    padding: 18px 0 0 7px;
    background: #f0f0f0;
}
.sl-bar i {
    display: block;
    width: 3px;
    height: 103px;
    background: #808080;
}

/* Painel */
.dashboard {
    margin: 33px 0 0 25px;
    width: 1070px;
}
.dash-top {
    display: flex;
    align-items: flex-start;
    height: 87px;
}
.dash-title {
    flex: none;
    width: 212px;
    margin: 0 0 0 13px;
    height: 50px;
    line-height: 52px;
    font-family: "Lato", sans-serif;
    font-weight: 700;
    font-size: 45px;
    color: #fff;
    white-space: nowrap;
    text-shadow: 0 0 1px #fff;
}
.dash-mark {
    flex: none;
    width: 258px;
    height: 50px;
    padding-left: 6px;
    background: #fff;
    border-radius: 9px;
    line-height: 52px;
    font-family: "Lato", sans-serif;
    font-weight: 700;
    font-size: 45px;
    color: #4a7ebb;
    white-space: nowrap;
    text-shadow: 0 0 1px #4a7ebb;
}
.kpi {
    flex: none;
    display: flex;
    align-items: center;
    height: 66px;
    border-radius: 14px;
    color: #fff;
    font-family: "Lato", sans-serif;
    font-weight: 700;
    font-size: 24px;
    white-space: nowrap;
    text-shadow: 0 0 1px #fff;
    background: linear-gradient(#b39bca, #8f72ad 45%, #624b80);
    border: 1px solid #7d60a0;
    box-shadow: 3px 1px 7px 2px rgba(15, 15, 20, .85), inset 0 4px 2px -1px rgba(255, 255, 255, .55), inset 0 -4px 3px rgba(60, 40, 90, .6);
}
.kpi-a {
    width: 203px;
    margin: 2px 0 0 128px;
    padding: 0 0 0 3px;
    gap: 4px;
}
.kpi-b {
    width: 200px;
    margin: 3px 0 0 41px;
    padding-left: 6px;
    gap: 4px;
}
.dash-row {
    display: flex;
    align-items: flex-start;
    height: 202px;
}
.dash-row2 {
    margin-top: 16px;
}
.card {
    flex: none;
    position: relative;
    display: flex;
    flex-direction: column;
    border-radius: 30px;
    font-family: "Lato", sans-serif;
    background: linear-gradient(#b9a3d0 5%, #a78cc2 25%, #8c6eab 55%, #5e497b 96%);
    border: 2px solid #7d60a0;
    box-shadow: 3px 1px 10px 3px rgba(12, 12, 18, .85), inset 0 4px 2px -1px rgba(255, 255, 255, .6), inset 0 -4px 3px rgba(60, 40, 90, .65);
}
.card-bars {
    width: 660px;
    height: 202px;
}
.card-col {
    width: 377px;
    height: 199px;
    margin: 3px 0 0 23px;
}
.card-line {
    width: 659px;
    height: 202px;
    margin-left: 1px;
}
.card-pie {
    width: 377px;
    height: 199px;
    margin: 2px 0 0 23px;
}
.chart {
    flex: none;
    margin-left: -2px;
}
.fields {
    flex: none;
    display: flex;
    gap: 1px;
    height: 17px;
    padding-left: 16px;
    color: #111;
}
.card-bars .fields:first-child {
    margin-top: 11px;
}
.card-col .fields:first-child {
    margin-top: 15px;
    padding-left: 13px;
}
.card-col .fields-end {
    padding-left: 13px;
}
.card-line .fields:first-child {
    margin-top: 10px;
    padding-left: 18px;
}
.card-line .fields-end {
    padding-left: 18px;
}
.card-pie .fields:first-child {
    margin-top: 6px;
    padding-left: 14px;
}
.card-pie .fields:last-child {
    padding-left: 14px;
}
.fld {
    display: flex;
    align-items: center;
    justify-content: space-between;
    flex: none;
    height: 17px;
    padding: 0 4px;
    background: linear-gradient(#e4e4e4, #bdbdbd);
    font-size: 11px;
    white-space: nowrap;
    overflow: hidden;
}
.drop {
    flex: none;
    width: 0;
    height: 0;
    border: 4px solid transparent;
    border-top: 4px solid #444;
    border-bottom: 0;
}
.f1 { width: 109px; }
.f2 { width: 172px; }
.f-tipo { width: 44px; }
.c1 { width: 71px; }
.c2 { width: 68px; }
.c3 { width: 95px; }
.c4 { width: 107px; }
.t1 { width: 63px; }
.t2 { width: 44px; }
.t3 { width: 46px; }
.l1 { width: 115px; }
.l2 { width: 109px; }
.l3 { width: 152px; }
.l4 { width: 172px; }
.p1 { width: 99px; }
.p2 { width: 95px; }
.p3 { width: 148px; }
.v1 { width: 45px; }
.pm {
    flex: none;
    width: 15px;
    height: 17px;
    background: linear-gradient(#e4e4e4, #bdbdbd);
    color: #888;
    font-size: 13px;
    font-weight: 700;
    line-height: 16px;
    text-align: center;
}
.t3 + .pm {
    margin-left: auto;
}
.card-col .fields-end {
    padding-right: 16px;
}
.card-line .fields-end {
    padding-right: 14px;
}

/* Textos dos graficos */
.chart text {
    font-family: "Lato", sans-serif;
}
.bar-val text {
    font-size: 11px;
    font-weight: 700;
    fill: #fff;
    text-anchor: middle;
}
.cat-dark text {
    font-size: 11px;
    fill: #463c55;
    text-anchor: middle;
}
.cat-light text {
    font-size: 11px;
    fill: #bfb2cd;
    text-anchor: middle;
}
.ax-y text {
    font-size: 11px;
    fill: #bfb2cd;
    text-anchor: end;
}
.legend text {
    font-size: 11px;
    fill: #c2b5d2;
}
.svg-fld {
    font-size: 11px;
    fill: #111;
}
.grid-dark {
    fill: none;
    stroke: #55505c;
    stroke-width: 1;
}
.bars-red rect {
    fill: none;
    stroke: #d9534f;
    stroke-width: 1;
}
.bars-green rect {
    fill: none;
    stroke: #a8c84e;
    stroke-width: 1;
}
.bars-purple rect {
    fill: #8a72b0;
    stroke: #7d68a5;
}

.float-copilot {
    position: absolute;
    left: 1457px;
    top: 592px;
    display: flex;
    align-items: center;
    justify-content: center;
    width: 30px;
    height: 30px;
    background: #fff;
    border-radius: 8px;
}
.float-cell {
    position: absolute;
    left: 1461px;
    top: 624px;
    width: 21px;
    height: 16px;
    background: #8a8a8a;
    border: 2px solid #107c41;
    border-bottom: 0;
    outline: 1px solid #ddd;
}

/* Planilhas */
.sheet-tabs {
    flex: 1;
    display: flex;
    align-items: flex-start;
    font-size: 17.200px;
    color: #2a2a2a;
}
.nav-arrow {
    flex: none;
    width: 9px;
    height: 9px;
    margin-top: 15px;
    border-left: 1.200px solid #777;
    border-bottom: 1.200px solid #777;
    transform: rotate(45deg);
}
.nav-arrow.left {
    margin-left: 34px;
}
.nav-arrow.right {
    margin-left: 26px;
    transform: rotate(225deg);
    margin-right: 75px;
}
.sheet-tab {
    flex: none;
    margin-top: 8px;
    line-height: 24px;
}
.tab-sep {
    flex: none;
    width: 1px;
    height: 24px;
    margin: 8px 22px 0 18px;
    background: #d5d5d5;
}
.sheet-tab.current {
    margin: 0 0 0 24px;
    width: 160px;
    height: 35px;
    padding: 4px 10px 0;
    background: #fff;
    border-radius: 0 0 6px 6px;
    font-weight: 700;
    font-size: 17.700px;
    white-space: nowrap;
    box-shadow: inset 0 -5px 0 #fff, inset 0 -7.500px 0 #107c41;
}
.sheet-tab.current + .tab-sep {
    margin-left: 4px;
}
.add-sheet {
    flex: none;
    margin: 2px 0 0 32px;
    font-size: 25px;
    line-height: 32px;
}
.kebab.dark {
    margin: 12px 0 0 252px;
    width: 8px;
}
.hscroll {
    display: flex;
    align-items: center;
    width: 553px;
    height: 21px;
    margin: 9px 0 0 17px;
    padding: 0 6px;
    background: #f4f5f5;
    border-radius: 10px;
}
.h-thumb {
    flex: 1;
    height: 11px;
    margin: 0 8px;
    background: #707070;
    border-radius: 6px;
}

/* Painel lateral */
.pane {
    flex: none;
    position: relative;
    display: flex;
    flex-direction: column;
    width: 356px;
    padding: 0 0 0 15px;
    background: #f0f0f0;
    border-left: 1px solid #c8c8c8;
}
.pane-head {
    display: flex;
    align-items: center;
    gap: 24px;
    height: 30px;
    margin-top: 11px;
    padding-right: 21px;
}
.pane-head h2 {
    flex: 1;
    margin: 0;
    font-size: 17px;
    font-weight: 600;
}
.pane-icons {
    display: flex;
    align-items: center;
    gap: 10px;
    margin: 8px 0 0 1px;
}
.pane-ico {
    display: flex;
    align-items: center;
    justify-content: center;
    width: 40px;
    height: 40px;
}
.pane-ico.on {
    background: #fff;
    border: 1px solid #555;
    border-radius: 5px;
}
.pane-rule {
    position: relative;
    height: 20px;
    margin-right: 15px;
    border-bottom: 1px solid #cfcfcf;
}
.pane-rule i {
    position: absolute;
    left: 14px;
    bottom: -6px;
    width: 12px;
    height: 12px;
    background: #f0f0f0;
    border-left: 1px solid #cfcfcf;
    border-top: 1px solid #cfcfcf;
    transform: rotate(45deg);
}
.pane-section {
    display: flex;
    align-items: center;
    height: 34px;
    padding-left: 9px;
    font-size: 14px;
    color: #222;
}
.pane-section .ch {
    width: 7px;
    height: 7px;
    margin: -3px 11px 0 2px;
}
.radio {
    display: flex;
    align-items: center;
    height: 29px;
    padding-left: 28px;
    font-size: 14.100px;
    color: #b8b8b8;
    white-space: nowrap;
    overflow: hidden;
}
.pane-section + .radio {
    margin-top: 7px;
}
.radio i {
    flex: none;
    width: 14px;
    height: 14px;
    margin-right: 8px;
    border: 1px solid #cfcfcf;
    border-radius: 50%;
}
.radio.on i {
    border-color: #cfcfcf;
    background: radial-gradient(circle, #b0b0b0 0 4px, transparent 4.500px);
}
.radio.clip {
    width: 340px;
}
.pane-scroll {
    position: absolute;
    left: 15px;
    top: 638px;
    display: flex;
    align-items: center;
    width: 304px;
    height: 21px;
    padding: 0 6px;
    background: #f7f7f7;
    border-radius: 10px;
}
.pane-thumb {
    flex: 1;
    height: 11px;
    margin: 0 8px 0 8px;
    background: #707070;
    border-radius: 6px;
}
.pane-strip {
    flex: 1;
    display: flex;
    flex-direction: column;
    align-items: center;
    background: #fafafa;
    padding-top: 0;
}
.strip-btn {
    display: flex;
    align-items: center;
    justify-content: center;
    width: 49px;
    height: 50px;
}
.strip-btn.on {
    background: #e6e6e6;
    border: 1px solid #666;
    border-radius: 6px;
}

/* Barra de status */
.status {
    flex: none;
    display: flex;
    align-items: center;
    height: 27px;
    padding-left: 14px;
    background: #f5f5f5;
    border-top: 1.500px solid #c8c8c8;
    border-bottom: 1.500px solid #c8c8c8;
    font-size: 12.500px;
}
.st-macro { margin-left: 24px; }
.st-acc { margin-left: 20px; }
.st-text { margin-left: 3px; }
.st-right {
    margin-left: auto;
    display: flex;
    align-items: center;
    height: 100%;
}
.view {
    display: flex;
    align-items: center;
    justify-content: center;
    width: 50px;
    height: 24px;
}
.view.on {
    background: #e0e0e0;
}
.zoom-btn {
    margin-left: 7px;
    font-size: 16px;
    color: #333;
}
.zoom-track {
    position: relative;
    width: 124px;
    height: 1.500px;
    margin-left: 6px;
    background: #666;
}
.zoom-btn + .zoom-track + .zoom-btn {
    margin-left: 6px;
}
.zoom-track .thumb {
    position: absolute;
    left: 46px;
    top: -8px;
    width: 6px;
    height: 17px;
    background: #555;
}
.zoom-track .mid {
    position: absolute;
    left: 62px;
    top: -4px;
    width: 1px;
    height: 9px;
    background: #666;
}
.zoom-val {
    width: 60px;
    padding: 0 14px 0 20px;
    text-align: right;
    white-space: nowrap;
}

/* Barra de tarefas */
.taskbar {
    flex: 1;
    display: flex;
    align-items: center;
    background: #dbe3ea;
}
.weather {
    flex: none;
    position: relative;
    display: flex;
    align-items: center;
    width: 557px;
    padding-left: 27px;
}
.weather-text {
    display: flex;
    flex-direction: column;
    margin-left: 12px;
    font-size: 14px;
    line-height: 20px;
}
.dim {
    color: #555;
}
.badge {
    position: absolute;
    display: flex;
    align-items: center;
    justify-content: center;
    border-radius: 50%;
    color: #fff;
    font-size: 12px;
}
.red-badge {
    left: 38px;
    top: -9px;
    width: 20px;
    height: 20px;
    background: #c42b1c;
}
.task-center {
    flex: none;
    display: flex;
    align-items: center;
}
.task-search {
    display: flex;
    align-items: center;
    width: 273px;
    height: 38px;
    margin: 0 4px 0 17px;
    padding-left: 13px;
    background: #f4f7f9;
    border-radius: 19px;
    font-size: 16px;
    color: #555;
}
.task-search span {
    flex: 1;
    margin-left: 12px;
}
.tennis {
    margin-right: 9px;
}
.app-ico {
    position: relative;
    flex: none;
    display: flex;
    align-items: center;
    justify-content: center;
    width: 55px;
    height: 48px;
}
.app-ico.dot::after {
    content: "";
    position: absolute;
    left: 25px;
    bottom: -2px;
    width: 6px;
    height: 6px;
    border-radius: 50%;
    background: #7a7a7a;
}
.app-ico.current {
    width: 48px;
    margin-left: 4px;
    background: #eef2f5;
    border-radius: 5px;
}
.app-ico.current::after {
    content: "";
    position: absolute;
    left: 14px;
    bottom: 1px;
    width: 20px;
    height: 4px;
    border-radius: 2px;
    background: #0078d4;
}
.blue-badge {
    right: 2px;
    top: 0;
    width: 20px;
    height: 20px;
    background: #0078d4;
}
.tray {
    flex: 1;
    display: flex;
    align-items: center;
    justify-content: flex-end;
    gap: 8px;
    padding-right: 24px;
    font-size: 14.500px;
    color: #222;
}
.t-cloud { margin-left: 10px; }
.t-lang { margin: 0 14px; }
.clock {
    display: flex;
    flex-direction: column;
    align-items: flex-end;
    margin-left: 12px;
    line-height: 20px;
}
```
